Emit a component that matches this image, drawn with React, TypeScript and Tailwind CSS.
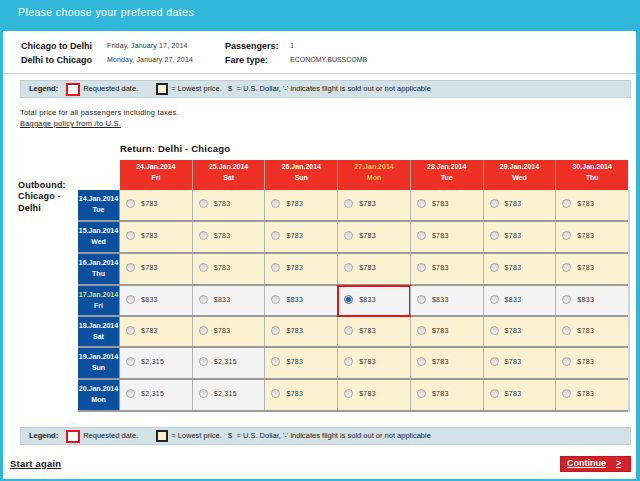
import React from "react";

const cols = [
  ["24.Jan.2014", "Fri"],
  ["25.Jan.2014", "Sat"],
  ["26.Jan.2014", "Sun"],
  ["27.Jan.2014", "Mon"],
  ["28.Jan.2014", "Tue"],
  ["29.Jan.2014", "Wed"],
  ["30.Jan.2014", "Thu"],
];

type Row = {
  date: string;
  day: string;
  h: string;
  prices: string[];
  cheap: boolean[];
  current?: boolean;
};

const all = (v: string) => Array(7).fill(v);
const yes = Array(7).fill(true);
const mixed = [false, false, true, true, true, true, true];

const rows: Row[] = [
  { date: "14.Jan.2014", day: "Tue", h: "h-[32px]", prices: all("$783"), cheap: yes },
  { date: "15.Jan.2014", day: "Wed", h: "h-[32px]", prices: all("$783"), cheap: yes },
  { date: "16.Jan.2014", day: "Thu", h: "h-[32px]", prices: all("$783"), cheap: yes },
  { date: "17.Jan.2014", day: "Fri", h: "h-[31px]", prices: all("$833"), cheap: Array(7).fill(false), current: true },
  { date: "18.Jan.2014", day: "Sat", h: "h-[31px]", prices: all("$783"), cheap: yes },
  { date: "19.Jan.2014", day: "Sun", h: "h-[32px]", prices: ["$2,315", "$2,315", "$783", "$783", "$783", "$783", "$783"], cheap: mixed },
  { date: "20.Jan.2014", day: "Mon", h: "h-[32px]", prices: ["$2,315", "$2,315", "$783", "$783", "$783", "$783", "$783"], cheap: mixed },
];

function Radio({ checked }: { checked?: boolean }) {
  return (
    <span
      className={
        "shrink-0 w-[9px] h-[9px] rounded-full border flex items-center justify-center " +
        (checked
          ? "border-[#6a6a6a] bg-[#d8d8d8]"
          : "border-[#a8a8a8] bg-gradient-to-b from-[#d4d4d4] to-[#f4f4f4]")
      }
    >
      {checked && <span className="w-[5px] h-[5px] rounded-full bg-[#1566b8]" />}
    </span>
  );
}

function Legend() {
  return (
    <div className="ml-[17px] mr-[5px] h-[18px] bg-[#d3e2e6] border border-[#bfd0d5] flex items-center pl-[8px] text-[7.5px] text-[#222]">
      <span className="font-bold">Legend:</span>
      <span className="ml-[8px] w-[14px] h-[13px] border-2 border-[#e8141c] bg-white" />
      <span className="ml-[3px]">Requested date.</span>
      <span className="ml-[18px] w-[12px] h-[12px] border-2 border-[#222] bg-[#fbf0cc]" />
      <span className="ml-[3px] whitespace-pre">
        {"= Lowest price.   $  = U.S. Dollar, '-' indicates flight is sold out or not applicable"}
      </span>
    </div>
  );
}

export default function App() {
  return (
    <div className="w-[640px] h-[481px] bg-[#31b7d9] flex flex-col pl-[3px] pr-[4px] pb-[2px] font-['Liberation_Sans',Arial,sans-serif] overflow-hidden">
      {/* title bar */}
      <div className="h-[31px] shrink-0 -ml-[3px] pl-[18px] pt-[5px] text-white text-[10.5px] leading-[14px] tracking-[0.4px]">
        Please choose your prefered dates
      </div>

      <div className="flex-1 bg-white flex flex-col text-[#111]">
        {/* trip info */}
        <div className="pt-[8px] pl-[18px] grid grid-cols-[86px_118px_65px_1fr] items-center leading-[14px]">
          <span className="font-bold text-[9px]">Chicago to Delhi</span>
          <span className="text-[7px] tracking-[0.15px] text-[#333]">Friday, January 17, 2014</span>
          <span className="font-bold text-[9px]">Passengers:</span>
          <span className="text-[7px] text-[#333]">1</span>
          <span className="font-bold text-[9px]">Delhi to Chicago</span>
          <span className="text-[7px] tracking-[0.15px] text-[#333]">Monday, January 27, 2014</span>
          <span className="font-bold text-[9px]">Fare type:</span>
          <span className="text-[7px] text-[#333]">ECONOMY,BUSSCOMB</span>
        </div>
        <div className="mt-[6px] border-t border-[#cfcfcf]" />

        <div className="mt-[6px]">
          <Legend />
        </div>

        <div className="mt-[9px] pl-[17px] text-[7.5px] leading-[11px] tracking-[0.2px] text-[#222]">
          <div>Total price for all passengers including taxes.</div>
          <div className="underline">Baggage policy from /to U.S.</div>
        </div>

        <div className="mt-[14px] pl-[117px] font-bold text-[9.5px] leading-[12px] tracking-[0.2px]">
          Return: Delhi - Chicago
        </div>

        {/* fares table */}
        <div className="mt-[5px] flex">
          <div className="w-[75px] shrink-0 pl-[15px] pt-[20px] font-bold text-[9px] leading-[11.3px] tracking-[0.2px]">
            Outbound:
            <br />
            Chicago -
            <br />
            Delhi
          </div>
          <div className="w-[552px] shrink-0">
            <div className="flex h-[30px] pr-[2px]">
              <div className="w-[42px] shrink-0" />
              {cols.map(([d, w], i) => (
                <div
                  key={d}
                  className={
                    "flex-1 bg-[#ee3124] pt-[2px] text-center font-bold text-[7px] leading-[10.5px] " +
                    (i > 0 ? "border-l border-[#b9a4a4] " : "") +
                    (i === 3 ? "text-[#f9c24e]" : "text-white")
                  }
                >
                  <div>{d}</div>
                  <div>{w}</div>
                </div>
              ))}
            </div>
            <div className="border-r-2 border-[#d4d4d4]">
              {rows.map((r) => (
                <div key={r.date} className={"flex border-b-2 border-[#9a9a9a] " + r.h}>
                  <div className="w-[42px] shrink-0 bg-[#0b4f9f] pt-[3px] text-center font-bold text-[7px] leading-[11px] border-r border-[#8a9ab2]">
                    <div className={r.current ? "text-[#d9df6e]" : "text-white"}>{r.date}</div>
                    <div className={r.current ? "text-[#e6e6e6]" : "text-white"}>{r.day}</div>
                  </div>
                  {r.prices.map((p, i) => {
                    const sel = r.current && i === 3;
                    return (
                      <div
                        key={i}
                        className={
                          "relative flex-1 flex items-start pt-[9px] pl-[6px] gap-[6px] " +
                          (i > 0 ? "border-l border-[#b3b3b3] " : "") +
                          (r.cheap[i] ? "bg-[#fcf2d1]" : "bg-[#f3f3f3]")
                        }
                      >
                        <Radio checked={sel} />
                        <span className="text-[7px] leading-[9px] tracking-[0.3px] text-[#333]">{p}</span>
                        {sel && (
                          <span className="absolute -left-[1px] -right-[1px] -top-[1px] -bottom-[2px] border-2 border-[#e3141d]" />
                        )}
                      </div>
                    );
                  })}
                </div>
              ))}
            </div>
          </div>
        </div>

        <div className="mt-[15px]">
          <Legend />
        </div>

        <div className="mt-[11px] pl-[7px] pr-[5px] flex items-center justify-between">
          <span className="font-bold text-[9.5px] underline text-[#222] tracking-[0.2px]">Start again</span>
          <div className="w-[71px] h-[16px] bg-[#d42128] border border-[#b81a20] flex items-center pl-[6px] gap-[10px] text-white font-bold text-[9px] underline">
            <span>Continue</span>
            <span>&gt;</span>
          </div>
        </div>
      </div>
    </div>
  );
}
